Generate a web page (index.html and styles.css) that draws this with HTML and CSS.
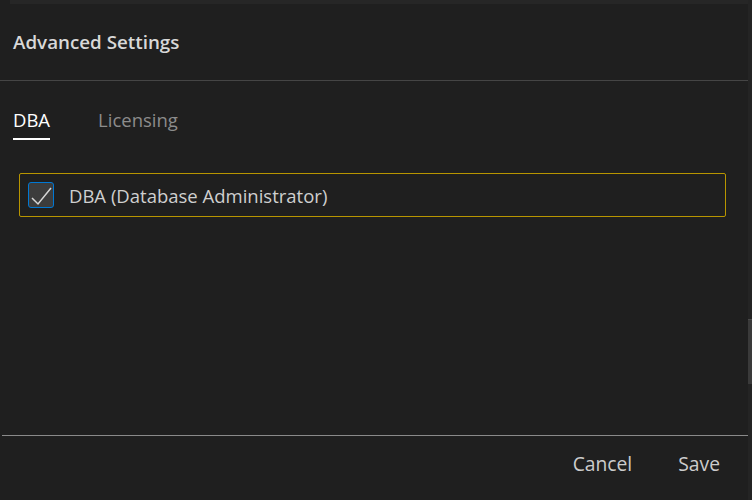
FILE: index.html
```html
<!DOCTYPE html>
<html lang="en">
<head>
    <meta charset="UTF-8">
    <meta name="viewport" content="width=device-width, initial-scale=1.0">
    <title>Advanced Settings</title>
    <link rel="stylesheet" href="styles.css">
</head>
<body>
    <div class="dialog">
        <div class="topbar"></div>
        <div class="header">
            <h1 class="title">Advanced Settings</h1>
        </div>
        <div class="tabs">
            <button class="tab active">DBA</button>
            <button class="tab">Licensing</button>
        </div>
        <div class="content">
            <label class="option">
                <span class="checkbox">
                    <svg width="24" height="24" viewBox="0 0 24 24">
                        <path d="M3 15 L9 21 L22 5" fill="none" stroke="#d6d6d6" stroke-width="1.5"/>
                    </svg>
                </span>
                <span class="option-label">DBA (Database Administrator)</span>
            </label>
        </div>
        <div class="footer">
            <button class="action">Cancel</button>
            <button class="action">Save</button>
        </div>
    </div>
    <div class="scroll-track">
        <div class="scroll-thumb"></div>
    </div>
</body>
</html>
```

FILE: styles.css
```css
body {
    margin: 0;
    background: #1f1f1f;
    font-family: 'Open Sans', 'Noto Sans', sans-serif;
    color: #d4d4d4;
    overflow: hidden;
}
.dialog {
    width: 748px;
    height: 500px;
    display: flex;
    flex-direction: column;
}
.topbar {
    height: 4px;
    margin-left: 10px;
    background: #262626;
}
.header {
    height: 76px;
    padding-left: 13px;
    display: flex;
    align-items: center;
    border-bottom: 1px solid #454545;
}
.title {
    margin: 0;
    font-size: 18.8px;
    font-weight: 600;
    color: #d8d8d8;
}
.tabs {
    display: flex;
    gap: 48px;
    padding: 26px 13px 0;
}
.tab {
    background: none;
    border: none;
    padding: 0 0 6px;
    font-family: inherit;
    font-size: 18.5px;
    color: #8c8c8c;
    border-bottom: 2px solid transparent;
}
.tab.active {
    color: #ffffff;
    border-bottom-color: #ffffff;
}
.content {
    flex: 1;
    padding: 33px 0 0 19px;
}
.option {
    width: 707px;
    height: 44px;
    display: flex;
    align-items: center;
    gap: 15px;
    padding-left: 8px;
    box-sizing: border-box;
    border: 1px solid #b89500;
    border-radius: 2px;
}
.checkbox {
    width: 24px;
    height: 24px;
    display: flex;
    background: #3c3c3c;
    border: 1px solid #0078d4;
    border-radius: 3px;
}
.option-label {
    font-size: 18.5px;
    color: #cfcfcf;
}
.footer {
    height: 65px;
    margin-left: 2px;
    border-top: 1px solid #8a8a8a;
    display: flex;
    justify-content: flex-end;
    align-items: flex-start;
    gap: 46px;
    padding: 14px 28px 0 0;
    box-sizing: border-box;
}
.action {
    background: none;
    border: none;
    padding: 0;
    font-family: inherit;
    font-size: 19.3px;
    color: #cccccc;
}
.scroll-track {
    position: absolute;
    top: 0;
    right: 0;
    width: 4px;
    height: 500px;
    background: #242424;
}
.scroll-thumb {
    position: absolute;
    top: 319px;
    left: 0;
    width: 4px;
    height: 64px;
    background: #3a3a3a;
    border-top: 1px solid #4a4a4a;
}
```
